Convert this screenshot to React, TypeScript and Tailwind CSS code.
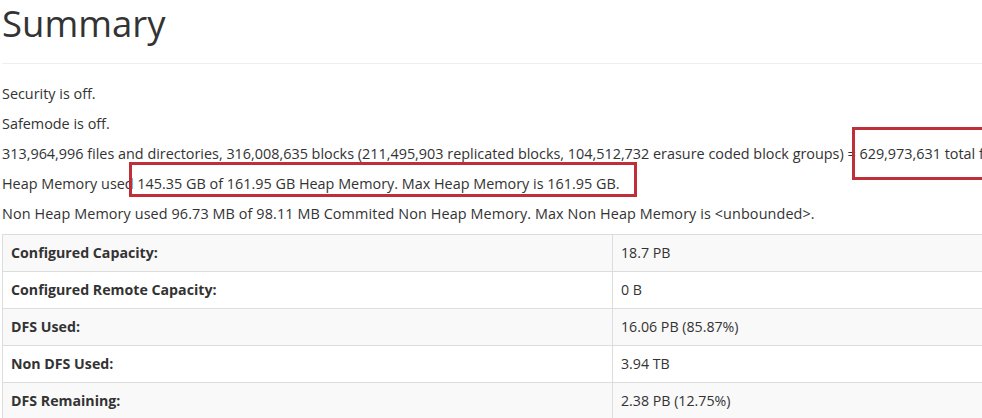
import React from "react";

const rows = [
  { label: "Configured Capacity:", value: "18.7 PB" },
  { label: "Configured Remote Capacity:", value: "0 B" },
  { label: "DFS Used:", value: "16.06 PB (85.87%)" },
  { label: "Non DFS Used:", value: "3.94 TB" },
  { label: "DFS Remaining:", value: "2.38 PB (12.75%)" },
  { label: "Block Pool Used:", value: "16.06 PB (85.87%)" },
];

export default function App() {
  return (
    <div className="relative w-[982px] h-[418px] overflow-hidden bg-white text-[#333] font-['Open_Sans','Noto_Sans',sans-serif]">
      <div className="pl-[2px] w-[1240px]">
        <h1 className="pt-[2px] text-[36.5px] leading-[42px] font-normal">Summary</h1>
        <hr className="mt-[19px] border-0 border-t border-[#eee]" />

        <div className="pt-[20px] text-[14.4px] leading-[20px] whitespace-nowrap">
          <p className="mb-[10px]">Security is off.</p>
          <p className="mb-[10px]">Safemode is off.</p>
          <p className="mb-[10px]">
            313,964,996 files and directories, 316,008,635 blocks (211,495,903 replicated blocks, 104,512,732 erasure coded block groups) = 629,973,631 total filesystem object(s).
          </p>
          <p className="mb-[10px]">
            Heap Memory used 145.35 GB of 161.95 GB Heap Memory. Max Heap Memory is 161.95 GB.
          </p>
          <p className="mb-[10px] tracking-[0.1px]">
            Non Heap Memory used 96.73 MB of 98.11 MB Commited Non Heap Memory. Max Non Heap Memory is &lt;unbounded&gt;.
          </p>
        </div>

        <table className="mt-[10px] w-full border-collapse border border-[#ddd] text-[14.2px] leading-[20px]">
          <tbody>
            {rows.map((row, i) => (
              <tr key={row.label} className={i % 2 === 0 ? "bg-[#f9f9f9]" : "bg-white"}>
                <th className="w-[610px] p-[8px] border border-[#ddd] text-left font-bold">{row.label}</th>
                <td className="p-[8px] border border-[#ddd]">{row.value}</td>
              </tr>
            ))}
          </tbody>
        </table>
      </div>

      {/* annotation boxes drawn over the page */}
      <div className="absolute left-[129px] top-[162px] w-[508px] h-[35px] border-[3px] border-[#bf2f3a]" />
      <div className="absolute left-[852px] top-[127px] w-[160px] h-[53px] border-[3px] border-[#bf2f3a]" />
    </div>
  );
}
